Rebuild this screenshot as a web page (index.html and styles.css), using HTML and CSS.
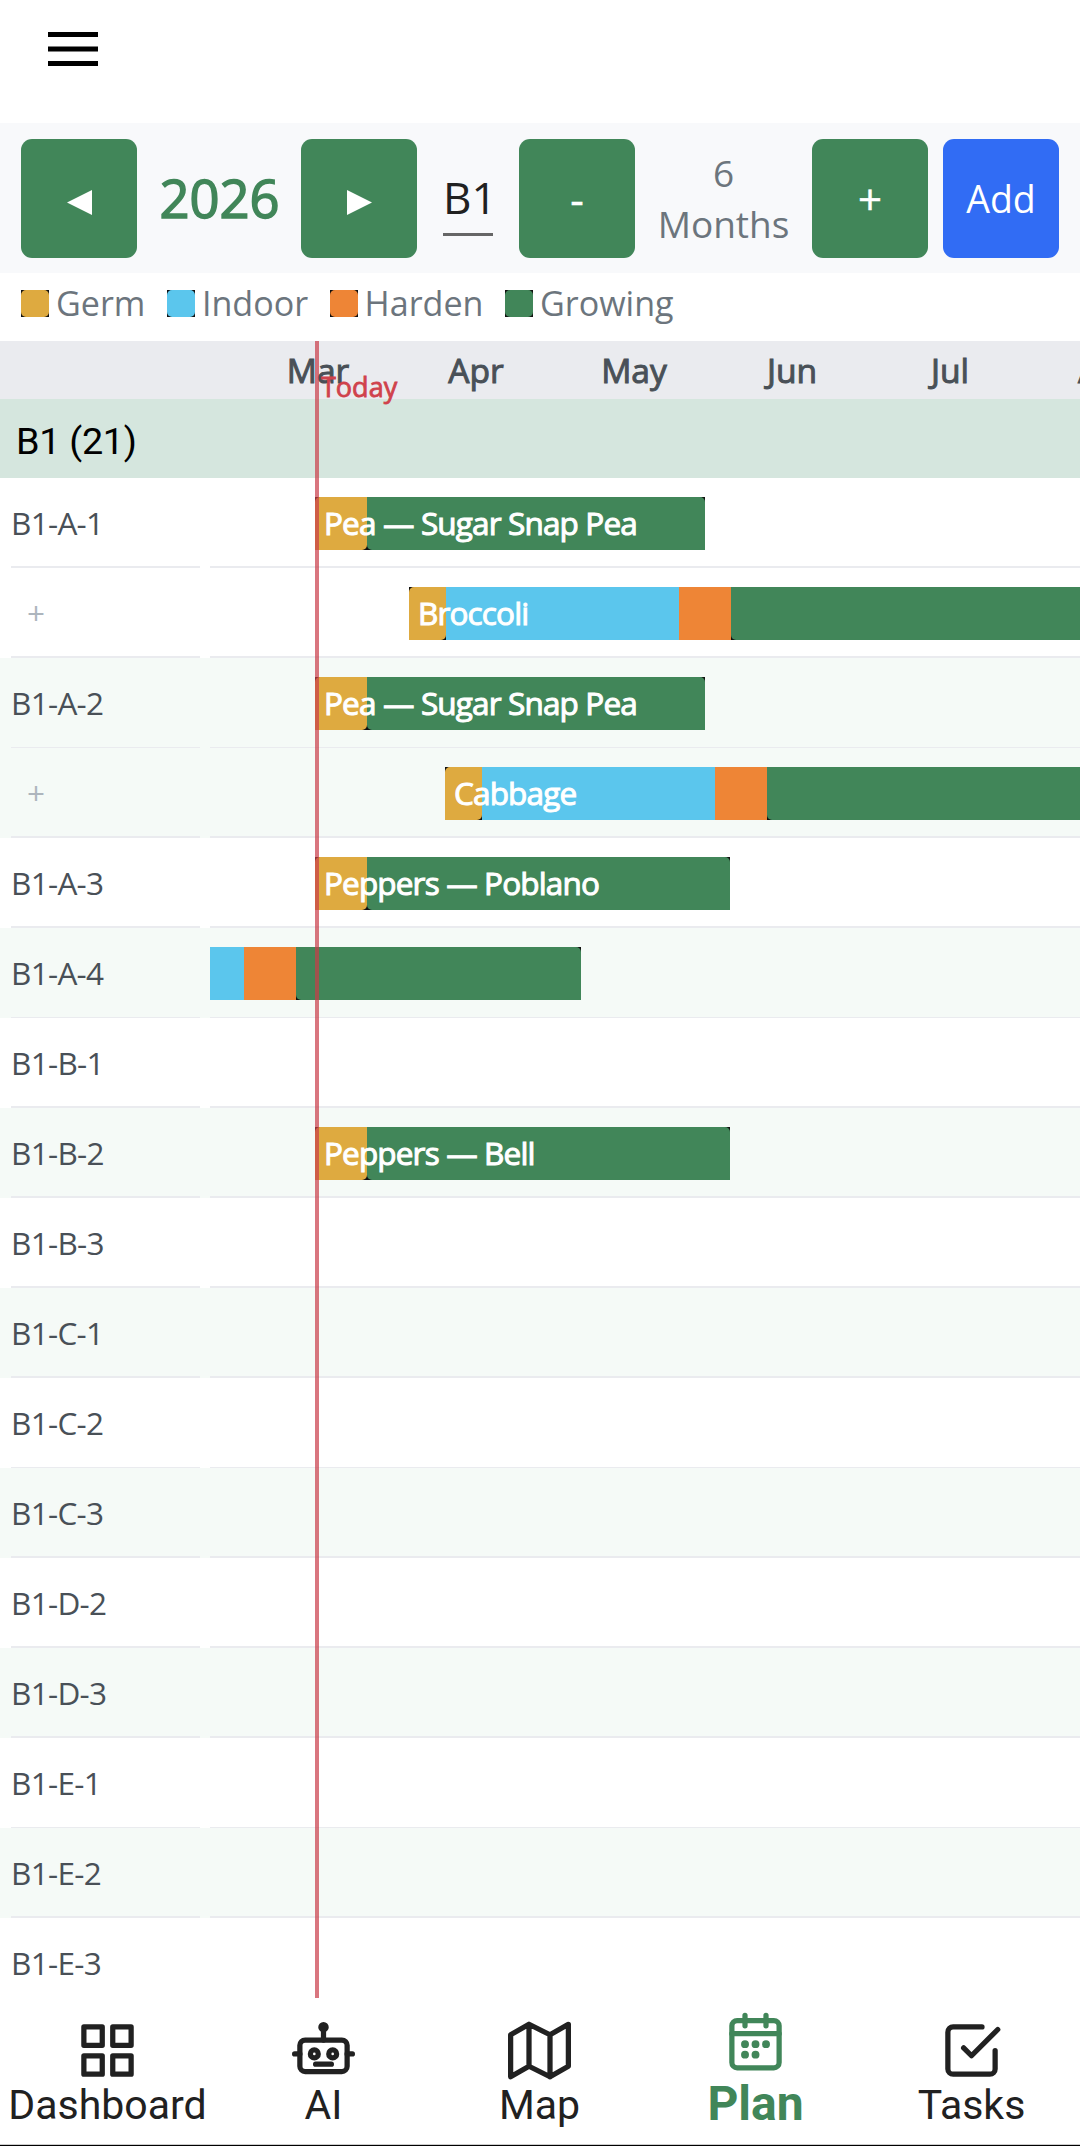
FILE: index.html
```
<!DOCTYPE html>
<html lang="en">

<head>
    <meta charset="UTF-8">
    <meta name="viewport" content="width=device-width, initial-scale=1.0">
    <title>Garden Plan</title>
    <link rel="stylesheet" href="styles.css">
</head>

<body>

    <header class="topbar">
        <svg class="menu-icon" viewBox="0 0 50 36">
            <path d="M0 3.5h50M0 18h50M0 32.5h50" stroke="#000" stroke-width="5.2" />
        </svg>
    </header>

    <div class="toolbar">
        <button class="btn"><svg class="arrow" viewBox="0 0 25 25"><path d="M25 0v25L0 12.5z" /></svg></button>
        <span class="year">2026</span>
        <button class="btn"><svg class="arrow" viewBox="0 0 25 25"><path d="M0 0v25l25-12.5z" /></svg></button>
        <span class="bed"><span class="bed-name">B1</span></span>
        <button class="btn btn-zoom">-</button>
        <span class="range">6<br>Months</span>
        <button class="btn btn-zoom">+</button>
        <button class="btn btn-add">Add</button>
    </div>

    <div class="legend">
        <span class="key"><span class="swatch"><i class="germ"></i></span>Germ</span>
        <span class="key"><span class="swatch"><i class="indoor"></i></span>Indoor</span>
        <span class="key"><span class="swatch"><i class="harden"></i></span>Harden</span>
        <span class="key"><span class="swatch"><i class="growing"></i></span>Growing</span>
    </div>

    <main class="gantt">
        <div class="months">
            <span>Mar</span><span>Apr</span><span>May</span><span>Jun</span><span>Jul</span><span>Aug</span>
        </div>
        <div class="group">B1 (21)</div>

        <div class="row">
            <div class="label">B1-A-1</div>
            <div class="track">
                <div class="bar" style="margin-left:105px">
                    <i class="germ" style="width:52px"></i><i class="growing" style="width:338px"></i>
                    <span class="crop">Pea — Sugar Snap Pea</span>
                </div>
            </div>
        </div>
        <div class="row">
            <div class="label more">+</div>
            <div class="track">
                <div class="bar" style="margin-left:199px">
                    <i class="germ" style="width:37px"></i><i class="indoor" style="width:233px"></i><i class="harden" style="width:52px"></i><i class="growing" style="width:400px"></i>
                    <span class="crop">Broccoli</span>
                </div>
            </div>
        </div>
        <div class="row alt thin">
            <div class="label">B1-A-2</div>
            <div class="track">
                <div class="bar" style="margin-left:105px">
                    <i class="germ" style="width:52px"></i><i class="growing" style="width:338px"></i>
                    <span class="crop">Pea — Sugar Snap Pea</span>
                </div>
            </div>
        </div>
        <div class="row alt">
            <div class="label more">+</div>
            <div class="track">
                <div class="bar" style="margin-left:235px">
                    <i class="germ" style="width:37px"></i><i class="indoor" style="width:233px"></i><i class="harden" style="width:52px"></i><i class="growing" style="width:400px"></i>
                    <span class="crop">Cabbage</span>
                </div>
            </div>
        </div>
        <div class="row">
            <div class="label">B1-A-3</div>
            <div class="track">
                <div class="bar" style="margin-left:105px">
                    <i class="germ" style="width:52px"></i><i class="growing" style="width:363px"></i>
                    <span class="crop">Peppers — Poblano</span>
                </div>
            </div>
        </div>
        <div class="row alt thin">
            <div class="label">B1-A-4</div>
            <div class="track">
                <div class="bar" style="margin-left:0px">
                    <i class="indoor" style="width:34px"></i><i class="harden" style="width:52px"></i><i class="growing" style="width:285px"></i>
                </div>
            </div>
        </div>
        <div class="row">
            <div class="label">B1-B-1</div>
            <div class="track"></div>
        </div>
        <div class="row alt">
            <div class="label">B1-B-2</div>
            <div class="track">
                <div class="bar" style="margin-left:105px">
                    <i class="germ" style="width:52px"></i><i class="growing" style="width:363px"></i>
                    <span class="crop">Peppers — Bell</span>
                </div>
            </div>
        </div>
        <div class="row">
            <div class="label">B1-B-3</div>
            <div class="track"></div>
        </div>
        <div class="row alt">
            <div class="label">B1-C-1</div>
            <div class="track"></div>
        </div>
        <div class="row thin">
            <div class="label">B1-C-2</div>
            <div class="track"></div>
        </div>
        <div class="row alt">
            <div class="label">B1-C-3</div>
            <div class="track"></div>
        </div>
        <div class="row">
            <div class="label">B1-D-2</div>
            <div class="track"></div>
        </div>
        <div class="row alt">
            <div class="label">B1-D-3</div>
            <div class="track"></div>
        </div>
        <div class="row thin">
            <div class="label">B1-E-1</div>
            <div class="track"></div>
        </div>
        <div class="row alt">
            <div class="label">B1-E-2</div>
            <div class="track"></div>
        </div>
        <div class="row last">
            <div class="label">B1-E-3</div>
            <div class="track"></div>
        </div>

        <div class="today"><span class="today-label">Today</span></div>
    </main>

    <nav class="tabs">
        <a class="tab">
            <svg class="icon" viewBox="0 0 24 24"><path d="M3 3h7v7H3zM14 3h7v7h-7zM14 14h7v7h-7zM3 14h7v7H3z" /></svg>
            Dashboard
        </a>
        <a class="tab">
            <svg class="icon" viewBox="0 0 24 24">
                <rect x="3" y="8" width="18" height="12" rx="2" />
                <path d="M12 8V4M1 13.3h2M21 13.3h2M9 17.2h6" />
                <circle cx="12" cy="3.1" r="1" /><circle cx="8.5" cy="13.3" r="1.5" /><circle cx="15.5" cy="13.3" r="1.5" />
            </svg>
            AI
        </a>
        <a class="tab">
            <svg class="icon" viewBox="0 0 24 24"><path d="M1 6v16l7-4 8 4 7-4V2l-7 4-8-4zM8 2v16M16 6v16" /></svg>
            Map
        </a>
        <a class="tab active">
            <svg class="icon" viewBox="0 0 24 24">
                <rect x="3" y="4" width="18" height="18" rx="2" />
                <path d="M16 2v4M8 2v4M3 9h18" />
                <path d="M8 13h.01M12 13h.01M16 13h.01M8 17h.01M12 17h.01" stroke-width="3" />
            </svg>
            Plan
        </a>
        <a class="tab">
            <svg class="icon" viewBox="0 0 24 24"><path d="M9 11l3 3L22 4" /><path d="M21 12v7a2 2 0 0 1-2 2H5a2 2 0 0 1-2-2V5a2 2 0 0 1 2-2h11" /></svg>
            Tasks
        </a>
    </nav>

</body>

</html>
```
FILE: styles.css
```
* {
    box-sizing: border-box;
}

body {
    margin: 0;
    height: 2146px;
    display: flex;
    flex-direction: column;
    overflow: hidden;
    background: #fff;
    font-family: "Open Sans", "Noto Sans", sans-serif;
    color: #212121;
}

.topbar {
    height: 123px;
    padding: 31px 0 0 48px;
}

.menu-icon {
    display: block;
    width: 50px;
    height: 36px;
}

.toolbar {
    display: flex;
    align-items: center;
    height: 150px;
    padding: 1px 21px 0;
    background: #f8f9fb;
}

.btn {
    width: 116px;
    height: 119px;
    flex: none;
    padding: 0;
    border: 0;
    border-radius: 11px;
    background: #418659;
    color: #fff;
    font: 37.5px "Open Sans", sans-serif;
}

.btn-zoom {
    font-size: 42px;
    -webkit-text-stroke: 0.5px #fff;
}

.btn-add {
    margin-left: 15px;
    background: #316cf4;
}

.arrow {
    display: block;
    width: 25px;
    height: 25px;
    margin: 7px auto 0;
    fill: #fff;
}

.year {
    width: 164px;
    padding: 0 0 2px 1px;
    text-align: center;
    font-size: 52.5px;
    color: #418659;
    -webkit-text-stroke: 1.5px #418659;
}

.bed {
    width: 102px;
    display: flex;
    justify-content: center;
}

.bed-name {
    width: 50px;
    height: 74px;
    line-height: 71px;
    text-align: center;
    font-size: 44px;
    border-bottom: 3px solid #666;
}

.range {
    width: 177px;
    padding-bottom: 2px;
    text-align: center;
    font-size: 37px;
    line-height: 51px;
    color: #6c757d;
}

.legend {
    display: flex;
    gap: 21.5px;
    height: 68px;
    padding: 0 21px 8px;
    align-items: center;
    font-size: 34.1px;
    color: #6c757d;
}

.key {
    display: flex;
    align-items: center;
    gap: 7px;
}

.swatch {
    width: 28px;
    height: 27px;
    background: #111;
}

.swatch i {
    display: block;
    height: 100%;
    border-radius: 5px;
}

.germ {
    background: #deaa40;
}

.indoor {
    background: #5bc6ed;
}

.harden {
    background: #ee8536;
}

.growing {
    background: #418659;
}

.gantt {
    position: relative;
    height: 1657px;
    overflow: hidden;
}

.months {
    display: flex;
    height: 58px;
    padding-left: 239px;
    background: #eaebef;
    overflow: hidden;
}

.months span {
    width: 158px;
    flex: none;
    text-align: center;
    font-size: 33.6px;
    line-height: 59px;
    color: #495057;
    -webkit-text-stroke: 1px #495057;
}

.group {
    height: 79px;
    padding-left: 16px;
    background: #d5e6de;
    font: 37.8px/84px Roboto, sans-serif;
    letter-spacing: -0.3px;
    color: #000;
}

.row {
    display: flex;
    gap: 10px;
    height: 90px;
    padding-left: 11px;
}

.alt {
    background: #f5faf7;
}

.label,
.track {
    border-bottom: 2px solid #eaebef;
}

.thin .label,
.thin .track {
    border-bottom-width: 1px;
}

.last .label,
.last .track {
    border-bottom: 0;
}

.label {
    width: 189px;
    flex: none;
    font-size: 31.5px;
    line-height: 90px;
    letter-spacing: -0.7px;
    color: #495057;
}

.more {
    padding-left: 16px;
    color: #adb5bd;
}

.track {
    flex: 1;
    min-width: 0;
    overflow: hidden;
}

.bar {
    position: relative;
    display: flex;
    width: max-content;
    height: 53px;
    margin-top: 19px;
    background: #111;
}

.bar .germ {
    border-radius: 5px 0;
}

.bar .growing {
    border-radius: 0 5px;
}

.crop {
    position: absolute;
    left: 9px;
    top: 0;
    line-height: 51px;
    font-size: 31.5px;
    letter-spacing: -0.85px;
    white-space: nowrap;
    color: #fff;
    -webkit-text-stroke: 1px #fff;
}

.today {
    position: absolute;
    left: 315px;
    top: 0;
    bottom: 0;
    width: 4px;
    background: rgba(201, 60, 72, 0.7);
}

.today-label {
    position: absolute;
    left: 6px;
    top: 27px;
    font-size: 27px;
    color: #d0424c;
    -webkit-text-stroke: 0.8px #d0424c;
}

.tabs {
    display: flex;
    height: 148px;
    border-bottom: 1px solid #000;
    box-shadow: inset 0 -1px #ccc;
    font-family: Roboto, sans-serif;
    font-size: 41px;
}

.tab {
    width: 216px;
    flex: none;
    display: flex;
    flex-direction: column;
    justify-content: flex-end;
    align-items: center;
    padding: 0 1px 16px 0;
    line-height: 47px;
}

.icon {
    width: 63px;
    height: 63px;
    margin-bottom: 0;
    fill: none;
    stroke: currentColor;
    stroke-width: 2;
    stroke-linecap: round;
    stroke-linejoin: round;
}

.active {
    color: #418659;
    font-size: 48px;
    font-weight: 700;
    padding-bottom: 18px;
}

.active .icon {
    margin-bottom: 7px;
}
```
